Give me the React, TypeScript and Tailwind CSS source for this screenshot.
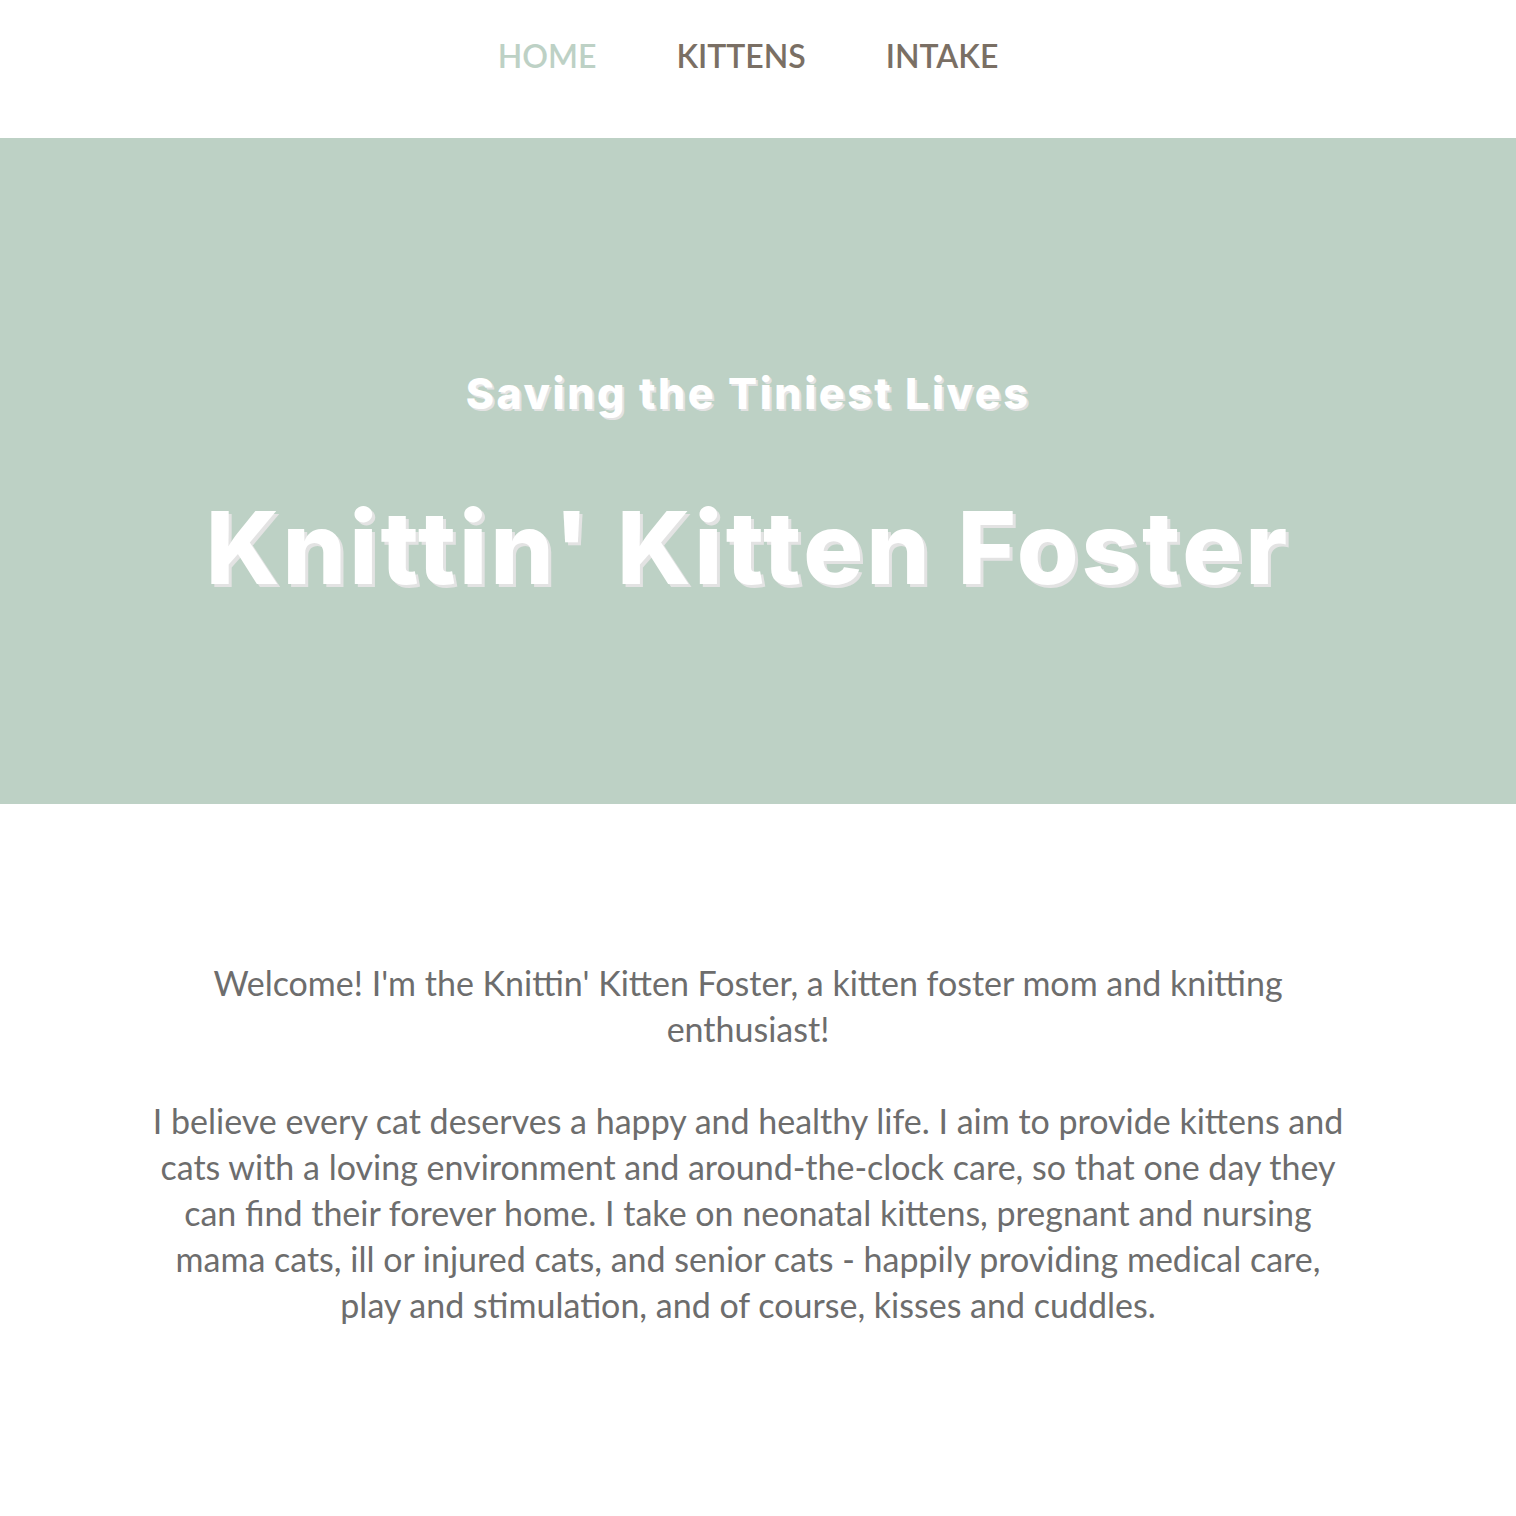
import React from "react";

const navigation = [
  { name: "HOME", current: true },
  { name: "KITTENS", current: false },
  { name: "INTAKE", current: false },
];

function classNames(...classes: string[]): string {
  return classes.filter(Boolean).join(" ");
}

export default function App() {
  return (
    <div className="min-h-screen bg-white font-['Lato','Noto_Sans',sans-serif]">
      <nav className="h-[138px] flex justify-center items-start pt-[32px] pr-[20px]">
        <ul className="flex flex-row gap-x-[80px]">
          {navigation.map((item) => (
            <li key={item.name} className="list-none">
              <a
                href="#"
                className={classNames(
                  item.current ? "text-[#bdd1c5]" : "text-[#7a6f64]",
                  "text-[32px] leading-[48px] font-semibold"
                )}
              >
                {item.name}
              </a>
            </li>
          ))}
        </ul>
      </nav>

      <header className="h-[666px] bg-[#bdd1c5] flex flex-col items-center justify-center pt-[31px] pr-[20px] font-['Inter',sans-serif] text-white">
        <h2 className="text-[43px] leading-[56px] font-extrabold tracking-[2.5px] [text-shadow:2px_2px_0_#e3e3e3]">
          Saving the Tiniest Lives
        </h2>
        <h1 className="mt-[67px] text-[100px] leading-[120px] font-extrabold tracking-[3px] [text-shadow:3px_3px_0_#e3e3e3]">
          Knittin' Kitten Foster
        </h1>
      </header>

      <main className="pt-[156px] pb-[188px] pr-[20px] flex justify-center">
        <div className="w-[1205px] text-center text-[#6d6d6d] text-[34px] leading-[46px]">
          <p>
            Welcome! I'm the Knittin' Kitten Foster, a kitten foster mom and knitting enthusiast!
          </p>
          <p className="mt-[46px]">
            I believe every cat deserves a happy and healthy life. I aim to provide kittens and cats with a
            loving environment and around-the-clock care, so that one day they can find their forever home. I
            take on neonatal kittens, pregnant and nursing mama cats, ill or injured cats, and senior cats -
            happily providing medical care, play and stimulation, and of course, kisses and cuddles.
          </p>
        </div>
      </main>
    </div>
  );
}
